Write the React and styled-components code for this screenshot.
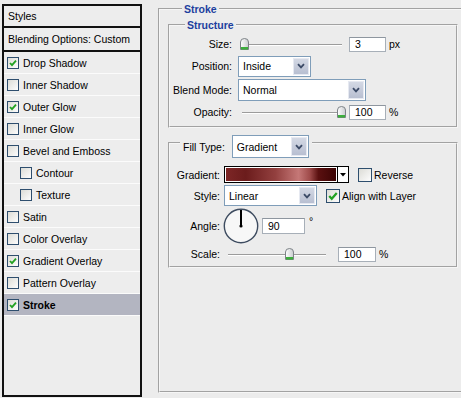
import React from 'react';
import styled, { createGlobalStyle } from 'styled-components';

const GlobalStyle = createGlobalStyle`
  html, body { margin: 0; padding: 0; background: #ececec; }
  body {
    font-family: "Liberation Sans", Arial, sans-serif;
    font-size: 10.5px;
    color: #000;
    overflow: hidden;
  }
`;

const Dialog = styled.div`
  display: flex;
  align-items: flex-start;
  gap: 16px;
  width: 461px;
  height: 398px;
  padding: 3px 0 0 2px;
  box-sizing: border-box;
  overflow: hidden;
  & > * { flex: none; }
`;

/* ---------- left style list ---------- */

const StyleList = styled.div`
  width: 140px;
  height: 393px;
  margin-top: 1px;
  box-sizing: border-box;
  border: 2px solid #111;
  background: #ededed;
  display: flex;
  flex-direction: column;
`;

const ListHeader = styled.div`
  height: ${p => p.$h}px;
  display: flex;
  align-items: center;
  padding-left: 4px;
  border-bottom: 2px solid #111;
`;

const ListRow = styled.div`
  height: 21px;
  display: flex;
  align-items: center;
  gap: 4px;
  padding-left: ${p => (p.$sub ? 16 : 3)}px;
  border-bottom: 1px solid #fbfbfb;
  background: ${p => (p.$active ? '#b3b5c1' : 'transparent')};
  font-weight: ${p => (p.$active ? 'bold' : 'normal')};
`;

const Box = styled.span`
  width: ${p => p.$size}px;
  height: ${p => p.$size}px;
  box-sizing: border-box;
  flex: none;
  border: 1px solid #2e4e6e;
  background: linear-gradient(135deg, #dcdcd6, #fdfdfd);
  display: flex;
  align-items: center;
  justify-content: center;
`;

const CheckBox = ({ checked, size = 12 }) => (
  <Box $size={size}>
    {checked && (
      <svg width={size - 4} height={size - 4} viewBox="0 0 8 8">
        <path d="M1 4 L3 6.2 L7 1.6" fill="none" stroke="#21a121" strokeWidth="1.8" />
      </svg>
    )}
  </Box>
);

/* ---------- right panel ---------- */

const Group = styled.fieldset`
  margin: ${p => p.$mt || 0}px 0 0 0;
  padding: 0 0 ${p => p.$pb || 0}px ${p => p.$pl || 0}px;
  min-width: 0;
  width: ${p => p.$w}px;
  height: ${p => (p.$h ? `${p.$h}px` : 'auto')};
  box-sizing: border-box;
  border: 2px groove #f6f6f6;
`;

const Legend = styled.legend`
  margin-left: ${p => p.$ml}px;
  padding: 0 2px;
  font-weight: bold;
  color: #1d3f9e;
  line-height: 12px;
`;

const FillLegend = styled.legend`
  margin-left: 10px;
  padding: 7px 3px 0 3px;
  display: flex;
  align-items: center;
  gap: 7px;
`;

const Form = styled.div`
  display: grid;
  grid-template-columns: ${p => p.$label}px 1fr;
  grid-template-rows: ${p => p.$rows};
  column-gap: ${p => p.$gap}px;
  row-gap: ${p => p.$rowGap}px;
  margin-top: ${p => p.$mt}px;
  align-items: center;
`;

const Label = styled.span`
  text-align: right;
  white-space: nowrap;
`;

const Controls = styled.div`
  display: flex;
  align-items: center;
  gap: ${p => p.$gap ?? 3}px;
`;

const SelectBox = styled.div`
  display: flex;
  align-items: stretch;
  width: ${p => p.$w}px;
  height: ${p => p.$h}px;
  box-sizing: border-box;
  border: 1px solid #7f9db9;
  background: #fff;
  padding: 1px;
`;

const SelectValue = styled.span`
  flex: 1;
  display: flex;
  align-items: center;
  padding-left: 3px;
`;

const DropButton = styled.span`
  width: 16px;
  box-sizing: border-box;
  border: 1px solid #e6e9f1;
  background: linear-gradient(#d3d8e4, #b8bfd1);
  display: flex;
  align-items: center;
  justify-content: center;
`;

const Select = ({ value, w, h }) => (
  <SelectBox $w={w} $h={h}>
    <SelectValue>{value}</SelectValue>
    <DropButton>
      <svg width="8" height="6" viewBox="0 0 8 6">
        <path d="M1 1.2 L4 4.4 L7 1.2" fill="none" stroke="#3b4a66" strokeWidth="1.8" />
      </svg>
    </DropButton>
  </SelectBox>
);

const Field = styled.span`
  width: ${p => p.$w}px;
  height: ${p => p.$h || 15}px;
  box-sizing: border-box;
  border: 1px solid #a7afb8;
  border-top-color: #8e969f;
  background: #fff;
  display: flex;
  align-items: center;
  padding-left: 5px;
  margin-left: ${p => p.$ml || 0}px;
`;

const Unit = styled.span`
  margin-top: ${p => (p.$raised ? -10 : 0)}px;
  margin-left: ${p => (p.$raised ? 1 : 0)}px;
`;

const SliderWrap = styled.div`
  position: relative;
  width: ${p => p.$w}px;
  height: 14px;
`;

const Track = styled.div`
  position: absolute;
  left: 4px;
  right: 4px;
  top: 7px;
  height: 1px;
  background: #9c9c9c;
  box-shadow: 0 1px 0 #fff;
`;

const Thumb = styled.svg`
  position: absolute;
  top: 1px;
`;

const Slider = ({ w, pos }) => (
  <SliderWrap $w={w}>
    <Track />
    <Thumb width="9" height="12" viewBox="0 0 9 12" style={{ left: pos }}>
      <defs>
        <linearGradient id="tg" x1="0" x2="1">
          <stop offset="0" stopColor="#ffffff" />
          <stop offset="1" stopColor="#c9cccf" />
        </linearGradient>
      </defs>
      <path d="M0.5 4 Q0.5 0.5 4.5 0.5 Q8.5 0.5 8.5 4 V11.5 H0.5 Z" fill="url(#tg)" stroke="#7d8287" />
      <rect x="1" y="9" width="7" height="2.5" fill="#3cae3c" />
    </Thumb>
  </SliderWrap>
);

const GradientPicker = styled.div`
  display: flex;
  height: 17px;
  border: 1px solid #000;
  box-sizing: border-box;
`;

const GradientSwatch = styled.div`
  width: 110px;
  border: 1px solid #fff;
  background: linear-gradient(90deg, #7d2626 0%, #6b1c1c 18%, #93403f 45%, #c57877 66%, #a04c4b 76%, #5a1010 84%, #3c0404 100%);
`;

const ArrowBox = styled.div`
  width: 10px;
  border-left: 1px solid #000;
  background: #fff;
  display: flex;
  align-items: center;
  justify-content: center;
`;

const CheckLabel = styled.label`
  display: flex;
  align-items: center;
  gap: 2px;
  margin-left: ${p => p.$ml}px;
`;

const Dial = () => (
  <svg width="36" height="36" viewBox="0 0 36 36" style={{ marginLeft: -1 }}>
    <circle cx="18" cy="18" r="16.7" fill="#f7f7f7" stroke="#3e4c60" strokeWidth="1.4" />
    <line x1="18" y1="2" x2="18" y2="18" stroke="#000" strokeWidth="2" />
    <circle cx="18" cy="18" r="1.6" fill="#000" />
  </svg>
);

const styleItems = [
  { label: 'Drop Shadow', checked: true },
  { label: 'Inner Shadow' },
  { label: 'Outer Glow', checked: true },
  { label: 'Inner Glow' },
  { label: 'Bevel and Emboss' },
  { label: 'Contour', sub: true },
  { label: 'Texture', sub: true },
  { label: 'Satin' },
  { label: 'Color Overlay' },
  { label: 'Gradient Overlay', checked: true },
  { label: 'Pattern Overlay' },
  { label: 'Stroke', checked: true, active: true },
];

export default function App() {
  return (
    <>
      <GlobalStyle />
      <Dialog>
        <StyleList>
          <ListHeader $h={20}>Styles</ListHeader>
          <ListHeader $h={22}>Blending Options: Custom</ListHeader>
          {styleItems.map(item => (
            <ListRow key={item.label} $sub={item.sub} $active={item.active}>
              <CheckBox checked={item.checked} size={12} />
              <span>{item.label}</span>
            </ListRow>
          ))}
        </StyleList>

        <Group $w={312} $h={390} $pl={8}>
          <Legend $ml={14}>Stroke</Legend>

          <Group $w={290} $mt={4} $pb={5}>
            <Legend $ml={15}>Structure</Legend>
            <Form $label={62} $gap={6} $rows="18px 22px 22px 18px" $rowGap={2} $mt={4}>
              <Label>Size:</Label>
              <Controls>
                <Slider w={108} pos={2} />
                <Field $w={37}>3</Field>
                <Unit>px</Unit>
              </Controls>

              <Label>Position:</Label>
              <Select value="Inside" w={73} h={21} />

              <Label>Blend Mode:</Label>
              <Select value="Normal" w={128} h={22} />

              <Label>Opacity:</Label>
              <Controls>
                <Slider w={108} pos={99} />
                <Field $w={37}>100</Field>
                <Unit>%</Unit>
              </Controls>
            </Form>
          </Group>

          <Group $w={290} $pb={4}>
            <FillLegend>
              <span>Fill Type:</span>
              <Select value="Gradient" w={77} h={23} />
            </FillLegend>
            <Form $label={50} $gap={4} $rows="17px 21px 36px 16px" $rowGap={2} $mt={8}>
              <Label>Gradient:</Label>
              <Controls $gap={0}>
                <GradientPicker>
                  <GradientSwatch />
                  <ArrowBox>
                    <svg width="6" height="4" viewBox="0 0 6 4">
                      <path d="M0 0 H6 L3 3.5 Z" fill="#000" />
                    </svg>
                  </ArrowBox>
                </GradientPicker>
                <CheckLabel $ml={9}>
                  <CheckBox size={14} />
                  <span>Reverse</span>
                </CheckLabel>
              </Controls>

              <Label>Style:</Label>
              <Controls $gap={0}>
                <Select value="Linear" w={93} h={21} />
                <CheckLabel $ml={9}>
                  <CheckBox checked size={14} />
                  <span>Align with Layer</span>
                </CheckLabel>
              </Controls>

              <Label>Angle:</Label>
              <Controls $gap={3}>
                <Dial />
                <Field $w={43} $h={16}>90</Field>
                <Unit $raised>°</Unit>
              </Controls>

              <Label>Scale:</Label>
              <Controls $gap={3}>
                <Slider w={106} pos={61} />
                <Field $w={38} $ml={5}>100</Field>
                <Unit>%</Unit>
              </Controls>
            </Form>
          </Group>
        </Group>
      </Dialog>
    </>
  );
}
